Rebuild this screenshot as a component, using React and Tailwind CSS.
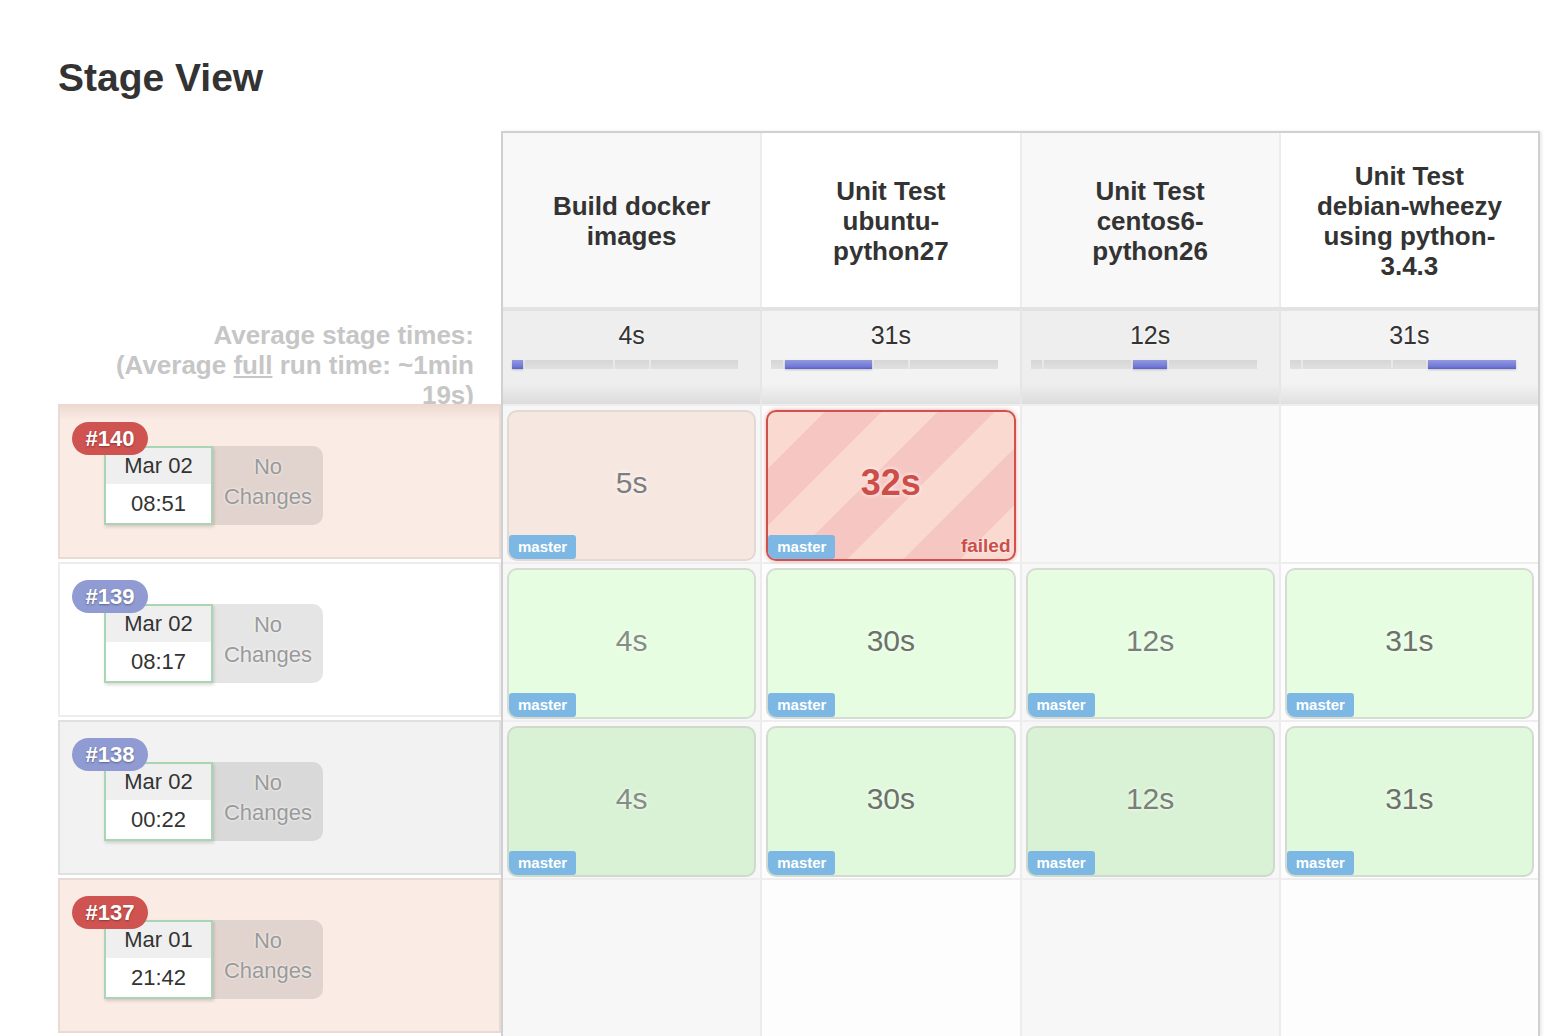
const stages = [
    { name: ["Build docker", "images"], avg: "4s", dur: 4 },
    { name: ["Unit Test", "ubuntu-", "python27"], avg: "31s", dur: 31 },
    { name: ["Unit Test", "centos6-", "python26"], avg: "12s", dur: 12 },
    { name: ["Unit Test", "debian-wheezy", "using python-", "3.4.3"], avg: "31s", dur: 31 },
];

const timeColors = ["text-[#858e84]", "text-[#6a7369]", "text-[#788177]", "text-[#6a7369]"];

const runs = [
    {
        id: "#140",
        failed: true,
        date: "Mar 02",
        time: "08:51",
        bg: "bg-[#fbebe5]",
        cells: [{ t: "5s", kind: "pink" }, { t: "32s", kind: "failed" }, null, null],
    },
    {
        id: "#139",
        date: "Mar 02",
        time: "08:17",
        bg: "bg-white",
        cells: [
            { t: "4s", kind: "green" },
            { t: "30s", kind: "green" },
            { t: "12s", kind: "green" },
            { t: "31s", kind: "green" },
        ],
    },
    {
        id: "#138",
        date: "Mar 02",
        time: "00:22",
        bg: "bg-[#f2f2f2]",
        cells: [
            { t: "4s", kind: "greenDark" },
            { t: "30s", kind: "greenLight" },
            { t: "12s", kind: "greenDark" },
            { t: "31s", kind: "greenLight" },
        ],
    },
    {
        id: "#137",
        failed: true,
        date: "Mar 01",
        time: "21:42",
        bg: "bg-[#fbebe5]",
        cells: [null, null, null, null],
    },
];

const cellBg = {
    pink: "bg-[#f6e7e1] border-[#e2d9d5]",
    green: "bg-[#e6fde1] border-[#d6dcd4]",
    greenDark: "bg-[#d9f1d4] border-[#cfd9cc]",
    greenLight: "bg-[#e0f8db] border-[#d3dbd1]",
};

export default function App() {
    return (
        <div className="min-h-screen bg-white pl-[58px] font-['Liberation_Sans',Helvetica,Arial,sans-serif] text-[#333]">
            <h1 className="pt-[55px] text-[39px] font-bold leading-[45px] text-[#333]">Stage View</h1>

            <div className="mt-[31px] flex">
                <LeftColumn />

                <div className="w-[1039px] border-l-2 border-r-2 border-t-2 border-[#d0d0d0] shadow-[2px_0_3px_rgba(0,0,0,0.08)]">
                    <div className="flex h-[174px]">
                        {stages.map((s, i) => (
                            <div
                                key={i}
                                className={`flex flex-1 items-center justify-center text-center text-[26px] font-bold leading-[30px] text-[#333] ${
                                    i > 0 ? "border-l-2 border-[#ececec]" : ""
                                } ${i % 2 === 0 ? "bg-[#f8f8f8]" : "bg-white"}`}
                            >
                                <div className="mt-[2px]">
                                    {s.name.map((line, j) => (
                                        <div key={j}>{line}</div>
                                    ))}
                                </div>
                            </div>
                        ))}
                    </div>

                    <div className="flex h-[97px]">
                        {stages.map((s, i) => (
                            <div
                                key={i}
                                className={`flex-1 border-t-[4px] border-t-[#e3e3e3] ${
                                    i > 0 ? "border-l-2 border-l-[#e6e6e6]" : ""
                                } ${
                                    i % 2 === 0
                                        ? "bg-[linear-gradient(to_bottom,#eeeeee_0%,#eeeeee_78%,#dcdcdc_100%)]"
                                        : "bg-[linear-gradient(to_bottom,#f3f3f3_0%,#f3f3f3_78%,#e0e0e0_100%)]"
                                }`}
                            >
                                <div className="pt-[9px] text-center text-[25px] leading-[30px] text-[#333] [text-shadow:0_0_3px_#fff]">
                                    {s.avg}
                                </div>
                                <Bar active={i} />
                            </div>
                        ))}
                    </div>

                    {runs.map(run => (
                        <div key={run.id} className="flex h-[158px] border-t-2 border-[#eeeeee]">
                            {run.cells.map((cell, i) => (
                                <div
                                    key={i}
                                    className={`flex-1 px-[4px] pb-[1px] pt-[4px] ${
                                        i > 0 ? "border-l-2 border-[#ececec]" : ""
                                    } ${i % 2 === 0 ? "bg-[#f7f7f7]" : "bg-[#fdfdfd]"}`}
                                >
                                    <StageCell cell={cell} col={i} />
                                </div>
                            ))}
                        </div>
                    ))}
                </div>
            </div>
        </div>
    );
}

function LeftColumn() {
    return (
        <div className="w-[443px] shrink-0">
            <div className="h-[176px]" />
            <div className="h-[97px] pr-[27px] pt-[13px] text-right text-[26px] font-bold leading-[30px] text-[#c6c6c6]">
                <div>Average stage times:</div>
                <div>
                    (Average <span className="underline">full</span> run time: ~1min
                </div>
                <div>19s)</div>
            </div>
            {runs.map((run, i) => (
                <RunHeader key={run.id} run={run} first={i === 0} />
            ))}
        </div>
    );
}

function RunHeader({ run, first }) {
    return (
        <div className="h-[158px] pb-[3px]">
            <div className={`relative h-full border-2 ${first ? "border-t-0" : ""} border-black/[0.07] ${run.bg}`}>
                {first && (
                    <div className="h-[16px] bg-[linear-gradient(to_bottom,#ecd8d1,#fbebe5)]" />
                )}
                <div className={first ? "pt-[2px]" : "pt-[16px]"}>
                    <div
                        className={`relative z-10 ml-[12px] h-[33px] w-[76px] rounded-full text-center text-[22px] font-bold leading-[33px] text-white [text-shadow:0_1px_2px_rgba(0,0,0,0.35)] ${
                            run.failed ? "bg-[#cf5350]" : "bg-[#8f9bd2]"
                        }`}
                    >
                        {run.id}
                    </div>
                    <div className="-mt-[9px] ml-[44px] flex">
                        <div className="h-[79px] w-[109px] border-2 border-[#a9d5b4] bg-white text-center text-[22px] text-[#333] shadow-[1px_2px_3px_rgba(0,0,0,0.15)]">
                            <div className="h-[36px] bg-[#efefef] leading-[36px]">{run.date}</div>
                            <div className="leading-[39px]">{run.time}</div>
                        </div>
                        <div className="h-[79px] w-[110px] rounded-r-[10px] bg-black/10 pt-[6px] text-center text-[22px] leading-[30px] text-[#9a9a9a] [text-shadow:0_0_3px_#fff]">
                            <div>No</div>
                            <div>Changes</div>
                        </div>
                    </div>
                </div>
            </div>
        </div>
    );
}

function Bar({ active }) {
    return (
        <div className="ml-[9px] mr-[22px] mt-[10px] flex h-[9px] gap-[2px] rounded-[2px] bg-[#e8e8e8]">
            {stages.map((s, i) => (
                <div
                    key={i}
                    style={{ flexGrow: s.dur, flexBasis: 0 }}
                    className={
                        i === active
                            ? "bg-[linear-gradient(to_bottom,#9399df,#727ad6_70%,#5a61c6)] shadow-[0_1px_2px_rgba(0,0,0,0.2)]"
                            : "bg-[linear-gradient(to_bottom,#d6d6d6,#e0e0e0)]"
                    }
                />
            ))}
        </div>
    );
}

function StageCell({ cell, col }) {
    if (!cell) return null;

    if (cell.kind === "failed") {
        return (
            <div className="relative flex h-full items-center justify-center rounded-[10px] border-2 border-[#d0504b] bg-[repeating-linear-gradient(135deg,#f9d9d0_0,#f9d9d0_40px,#f6c7c2_40px,#f6c7c2_80px)] shadow-[0_0_4px_rgba(208,80,75,0.5)]">
                <span className="-mt-[6px] text-[36px] font-bold text-[#cd4d48] [text-shadow:0_0_4px_#fff]">
                    {cell.t}
                </span>
                <MasterTag />
                <span className="absolute bottom-[2px] right-[3px] text-[19px] font-bold leading-[22px] text-[#cd4d48] [text-shadow:0_0_3px_#fff]">
                    failed
                </span>
            </div>
        );
    }

    return (
        <div className={`relative flex h-full items-center justify-center rounded-[10px] border-2 ${cellBg[cell.kind]}`}>
            <span
                className={`-mt-[6px] text-[30px] [text-shadow:0_0_4px_#fff] ${
                    cell.kind === "pink" ? "text-[#7e7e7e]" : timeColors[col]
                }`}
            >
                {cell.t}
            </span>
            <MasterTag />
        </div>
    );
}

function MasterTag() {
    return (
        <span className="absolute bottom-0 left-0 h-[24px] rounded-[3px] rounded-bl-[8px] bg-[#7cb8e3] px-[9px] text-[15px] font-bold leading-[24px] text-white">
            master
        </span>
    );
}
